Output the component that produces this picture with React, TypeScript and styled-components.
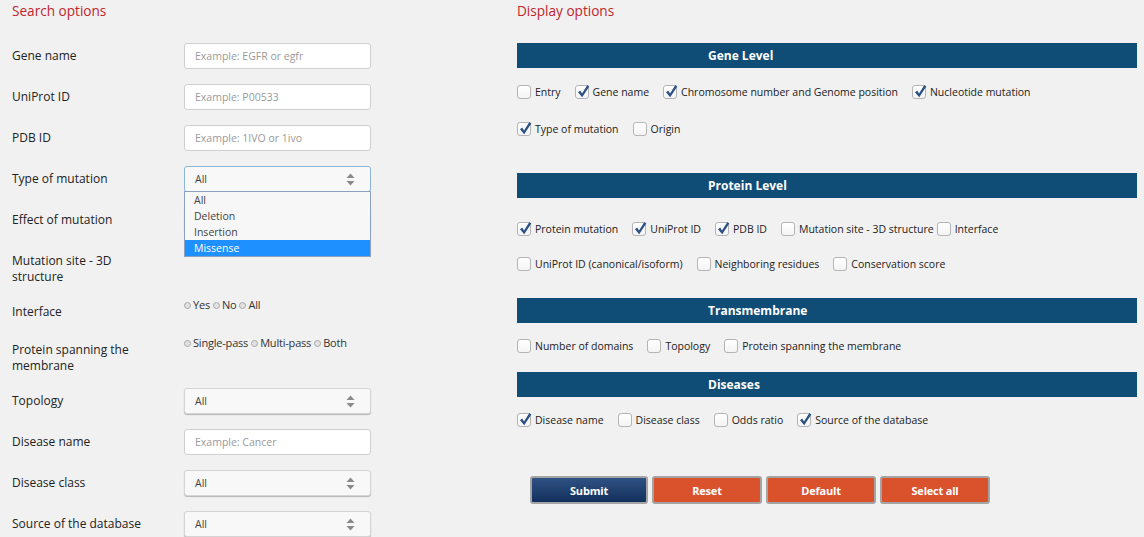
import React from "react";
import styled, { createGlobalStyle } from "styled-components";

const GlobalStyle = createGlobalStyle`
  html, body {
    margin: 0;
    padding: 0;
    background: #f1f1f1;
    font-family: "Open Sans", "Liberation Sans", Arial, sans-serif;
    color: #222;
  }
`;

type Field =
  | { kind: "input"; label: string; placeholder: string }
  | { kind: "select"; label: string; open?: boolean; covered?: boolean }
  | { kind: "radio"; label: string; options: string[] };

const searchFields: Field[] = [
  { kind: "input", label: "Gene name", placeholder: "Example: EGFR or egfr" },
  { kind: "input", label: "UniProt ID", placeholder: "Example: P00533" },
  { kind: "input", label: "PDB ID", placeholder: "Example: 1IVO or 1ivo" },
  { kind: "select", label: "Type of mutation", open: true },
  { kind: "select", label: "Effect of mutation", covered: true },
  { kind: "radio", label: "Mutation site - 3D structure", options: [] },
  { kind: "radio", label: "Interface", options: ["Yes", "No", "All"] },
  {
    kind: "radio",
    label: "Protein spanning the membrane",
    options: ["Single-pass", "Multi-pass", "Both"],
  },
  { kind: "select", label: "Topology" },
  { kind: "input", label: "Disease name", placeholder: "Example: Cancer" },
  { kind: "select", label: "Disease class" },
  { kind: "select", label: "Source of the database" },
];

type Option = { label: string; checked?: boolean; tight?: boolean };

const sections: {
  title: string;
  top: number;
  gap: number;
  bottom: number;
  rows: Option[][];
}[] = [
  {
    title: "Gene Level",
    top: 14,
    gap: 17,
    bottom: 34,
    rows: [
      [
        { label: "Entry" },
        { label: "Gene name", checked: true },
        { label: "Chromosome number and Genome position", checked: true },
        { label: "Nucleotide mutation", checked: true },
      ],
      [{ label: "Type of mutation", checked: true }, { label: "Origin" }],
    ],
  },
  {
    title: "Protein Level",
    top: 21,
    gap: 15,
    bottom: 24,
    rows: [
      [
        { label: "Protein mutation", checked: true },
        { label: "UniProt ID", checked: true },
        { label: "PDB ID", checked: true },
        { label: "Mutation site - 3D structure", tight: true },
        { label: "Interface" },
      ],
      [
        { label: "UniProt ID (canonical/isoform)" },
        { label: "Neighboring residues" },
        { label: "Conservation score" },
      ],
    ],
  },
  {
    title: "Transmembrane",
    top: 13,
    gap: 0,
    bottom: 16,
    rows: [
      [
        { label: "Number of domains" },
        { label: "Topology" },
        { label: "Protein spanning the membrane" },
      ],
    ],
  },
  {
    title: "Diseases",
    top: 13,
    gap: 0,
    bottom: 46,
    rows: [
      [
        { label: "Disease name", checked: true },
        { label: "Disease class" },
        { label: "Odds ratio" },
        { label: "Source of the database", checked: true },
      ],
    ],
  },
];

function Arrows() {
  return (
    <svg width="9" height="13" viewBox="0 0 9 13">
      <path d="M4.5 0.5 L8.5 5 L0.5 5 Z" fill="#8a8a8a" />
      <path d="M4.5 12.5 L8.5 8 L0.5 8 Z" fill="#8a8a8a" />
    </svg>
  );
}

function Check() {
  return (
    <CheckMark width="14" height="15" viewBox="0 0 14 15">
      <path
        d="M2 8.2 L4.2 6.6 L6 9.4 L11.4 1 L13.3 2.4 L6.2 13.2 Z"
        fill="#2b5185"
      />
    </CheckMark>
  );
}

function SearchRow({ field }: { field: Field }) {
  return (
    <Row $compact={field.kind === "radio"}>
      <Label>{field.label}</Label>
      <Control>
        {field.kind === "input" && <TextInput placeholder={field.placeholder} />}
        {field.kind === "select" && (
          <>
            <Select $focused={field.open}>
              {!field.covered && <span>All</span>}
              <Arrows />
            </Select>
            {field.open && (
              <Dropdown>
                <DropItem>All</DropItem>
                <DropItem>Deletion</DropItem>
                <DropItem>Insertion</DropItem>
                <DropItem $active>Missense</DropItem>
              </Dropdown>
            )}
          </>
        )}
        {field.kind === "radio" && (
          <RadioGroup>
            {field.options.map((o) => (
              <RadioItem key={o}>
                <RadioDot />
                {o}
              </RadioItem>
            ))}
          </RadioGroup>
        )}
      </Control>
    </Row>
  );
}

export default function App() {
  return (
    <>
      <GlobalStyle />
      <Page>
        <LeftColumn>
          <Heading>Search options</Heading>
          {searchFields.map((f) => (
            <SearchRow key={f.label} field={f} />
          ))}
        </LeftColumn>
        <RightColumn>
          <Heading>Display options</Heading>
          {sections.map((s) => (
            <section key={s.title}>
              <Bar>{s.title}</Bar>
              <SectionBody $top={s.top} $gap={s.gap} $bottom={s.bottom}>
                {s.rows.map((r, i) => (
                  <OptionLine key={i}>
                    {r.map((o) => (
                      <OptionItem key={o.label} $tight={o.tight}>
                        <Box>{o.checked && <Check />}</Box>
                        {o.label}
                      </OptionItem>
                    ))}
                  </OptionLine>
                ))}
              </SectionBody>
            </section>
          ))}
          <Buttons>
            <Button $primary>Submit</Button>
            <Button>Reset</Button>
            <Button>Default</Button>
            <Button>Select all</Button>
          </Buttons>
        </RightColumn>
      </Page>
    </>
  );
}

const Page = styled.div`
  display: flex;
  width: 1144px;
  height: 537px;
  overflow: hidden;
`;

const LeftColumn = styled.div`
  width: 493px;
  padding-left: 12px;
  flex-shrink: 0;
`;

const RightColumn = styled.div`
  width: 620px;
  padding-left: 12px;
`;

const Heading = styled.h2`
  margin: 0 0 10px;
  height: 33px;
  line-height: 22px;
  font-size: 13.6px;
  font-weight: 400;
  color: #c0262d;
`;

const Row = styled.div<{ $compact?: boolean }>`
  display: flex;
  align-items: flex-start;
  min-height: ${(p) => (p.$compact ? 24 : 26)}px;
  margin-bottom: ${(p) => (p.$compact ? 14 : 15)}px;
`;

const Label = styled.div`
  width: 142px;
  margin-right: 30px;
  padding-top: 5px;
  font-size: 12px;
  line-height: 16px;
  color: #222;
`;

const Control = styled.div`
  position: relative;
  width: 187px;
`;

const TextInput = styled.input`
  box-sizing: border-box;
  width: 187px;
  height: 26px;
  padding: 0 10px;
  border: 1px solid #cfcfcf;
  border-radius: 3px;
  background: #fff;
  font-family: inherit;
  font-size: 10.5px;
  outline: none;
  &::placeholder {
    color: #9a9a9a;
  }
`;

const Select = styled.div<{ $focused?: boolean }>`
  box-sizing: border-box;
  display: flex;
  align-items: center;
  justify-content: space-between;
  width: 187px;
  height: 26px;
  padding: 0 15px 0 10px;
  border: 1px solid ${(p) => (p.$focused ? "#8fb4dc" : "#d4d4d4")};
  border-radius: 3px;
  background: #f8f8f8;
  box-shadow: ${(p) => (p.$focused ? "none" : "0 1px 1px rgba(0,0,0,0.25)")};
  font-size: 10.5px;
  color: #444;
`;

const Dropdown = styled.div`
  position: absolute;
  top: 25px;
  left: 0;
  z-index: 2;
  box-sizing: border-box;
  width: 187px;
  border: 1px solid #8aa2c0;
  background: #f7f7f7;
`;

const DropItem = styled.div<{ $active?: boolean }>`
  height: 16px;
  line-height: 16px;
  padding-left: 9px;
  font-size: 10.5px;
  color: ${(p) => (p.$active ? "#fff" : "#444")};
  background: ${(p) => (p.$active ? "#1e90ff" : "transparent")};
`;

const RadioGroup = styled.div`
  display: flex;
`;

const RadioItem = styled.label`
  display: flex;
  align-items: center;
  margin-right: 3px;
  font-size: 11px;
  line-height: 12px;
  color: #333;
  letter-spacing: -0.2px;
`;

const RadioDot = styled.span`
  box-sizing: border-box;
  width: 7px;
  height: 7px;
  margin-right: 2px;
  border: 1px solid #a8a8a8;
  border-radius: 50%;
  background: #e2e2e2;
`;

const Bar = styled.div`
  height: 25px;
  padding-left: 191px;
  background: #0f4d76;
  color: #fff;
  font-size: 12px;
  font-weight: 700;
  line-height: 25px;
`;

const SectionBody = styled.div<{ $top: number; $gap: number; $bottom: number }>`
  display: flex;
  flex-direction: column;
  gap: ${(p) => p.$gap}px;
  padding-top: ${(p) => p.$top}px;
  padding-bottom: ${(p) => p.$bottom}px;
`;

const OptionLine = styled.div`
  display: flex;
  align-items: center;
  height: 20px;
`;

const OptionItem = styled.label<{ $tight?: boolean }>`
  display: flex;
  align-items: center;
  margin-right: ${(p) => (p.$tight ? 3 : 14)}px;
  font-size: 10.5px;
  color: #222;
`;

const Box = styled.span`
  position: relative;
  box-sizing: border-box;
  width: 14px;
  height: 14px;
  margin-right: 4px;
  border: 1px solid #b4b4b4;
  border-radius: 3px;
  background: linear-gradient(#ffffff, #f4f4f4);
`;

const CheckMark = styled.svg`
  position: absolute;
  left: 0;
  top: -2px;
`;

const Buttons = styled.div`
  display: flex;
  gap: 4px;
  padding-left: 13px;
`;

const Button = styled.button<{ $primary?: boolean }>`
  box-sizing: border-box;
  width: ${(p) => (p.$primary ? 118 : 110)}px;
  height: 28px;
  border: 2px solid #a4a4a4;
  border-radius: 3px;
  background: ${(p) =>
    p.$primary ? "linear-gradient(#2f5283, #13305d)" : "#d9522c"};
  color: #fff;
  font-family: inherit;
  font-size: 11px;
  font-weight: 700;
  letter-spacing: -0.2px;
`;
